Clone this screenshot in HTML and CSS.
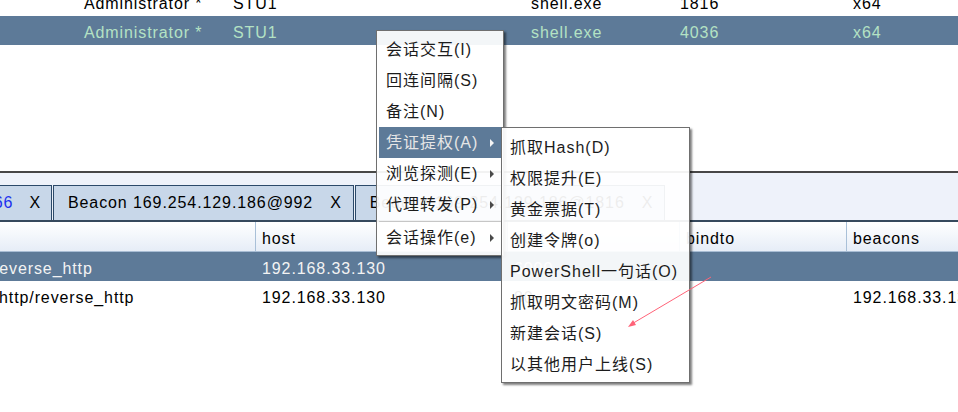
FILE: index.html
```html
<!DOCTYPE html>
<html>
<head>
<meta charset="utf-8">
<link rel="stylesheet" href="styles.css">
</head>
<body>
<div class="top-pane">
  <div class="top-grid">
    <div class="trow"><span></span><span>Administrator *</span><span>STU1</span><span>shell.exe</span><span>1816</span><span>x64</span></div>
    <div class="trow sel"><span></span><span>Administrator *</span><span>STU1</span><span>shell.exe</span><span>4036</span><span>x64</span></div>
  </div>
</div>
<div class="splitter"></div>
<div class="tabstrip">
  <div class="tabs">
    <div class="tab first"><span class="tab-label blue">Beacon 169.254.129.186@1866</span><span class="tab-x">X</span></div>
    <div class="tab"><span class="tab-label">Beacon 169.254.129.186@992</span><span class="tab-x">X</span></div>
    <div class="tab"><span class="tab-label">Beacon 169.254.129.186@1816</span><span class="tab-x">X</span></div>
  </div>
</div>
<div class="btable">
  <div class="bhead"><span></span><span>host</span><span>port</span><span>bindto</span><span>beacons</span></div>
  <div class="brow sel"><span class="c1 cut-a">reverse_http</span><span>192.168.33.130</span><span>6000</span><span></span><span></span></div>
  <div class="brow"><span class="c1 cut-b">http/reverse_http</span><span>192.168.33.130</span><span>80</span><span></span><span>192.168.33.130</span></div>
</div>

<div class="menu main">
  <div class="item">会话交互(I)</div>
  <div class="item">回连间隔(S)</div>
  <div class="item">备注(N)</div>
  <div class="item sel has-sub">凭证提权(A)</div>
  <div class="item has-sub">浏览探测(E)</div>
  <div class="item has-sub">代理转发(P)</div>
  <div class="sep"></div>
  <div class="item has-sub">会话操作(e)</div>
</div>
<div class="menu sub">
  <div class="item">抓取Hash(D)</div>
  <div class="item">权限提升(E)</div>
  <div class="item">黄金票据(T)</div>
  <div class="item">创建令牌(o)</div>
  <div class="item">PowerShell一句话(O)</div>
  <div class="item">抓取明文密码(M)</div>
  <div class="item">新建会话(S)</div>
  <div class="item">以其他用户上线(S)</div>
</div>

<svg class="mark" width="958" height="412" viewBox="0 0 958 412">
  <line x1="711" y1="277" x2="630" y2="325" stroke="#ff6378" stroke-width="1"/>
  <polygon points="628,327 636,325 633,320" fill="#ff6378"/>
</svg>
</body>
</html>
```
FILE: styles.css
```css
html, body {
  margin: 0;
  padding: 0;
}
body {
  width: 958px;
  height: 412px;
  overflow: hidden;
  position: relative;
  background: #ffffff;
  font-family: "Liberation Sans", "Noto Sans CJK SC", sans-serif;
  font-size: 16px;
  letter-spacing: 0.9px;
  color: #000000;
}

.top-pane {
  height: 171px;
  overflow: hidden;
}
.top-grid {
  margin-top: -13px;
}
.trow {
  display: grid;
  grid-template-columns: 77px 149px 298px 149px 173px 1fr;
  height: 29px;
}
.trow > span {
  padding: 4px 0 0 7px;
  line-height: 25px;
  white-space: nowrap;
  overflow: hidden;
}
.trow.sel {
  background: #5d7a98;
  color: #b4e2c4;
}

.splitter {
  height: 2px;
  background: #474747;
}
.tabstrip {
  background: #eef2fa;
  padding-top: 12px;
  border-bottom: 2px solid #36495d;
}
.tabs {
  display: flex;
  gap: 1px;
  height: 35px;
}
.tab {
  box-sizing: border-box;
  height: 35px;
  display: flex;
  align-items: center;
  flex: none;
  background: #c8d7e9;
  border: 1px solid #2c4a6a;
  border-bottom: none;
  padding: 0 11px 0 14px;
  white-space: nowrap;
}
.tab-label,
.tab-x {
  line-height: 20px;
}
.tab-x {
  margin-left: 17px;
}
.tab.first {
  width: 52px;
  justify-content: flex-end;
  overflow: hidden;
  border-left: none;
  padding-left: 0;
  padding-right: 10px;
}
.tab.first .tab-x {
  margin-left: 16px;
}
.tab-label.blue {
  color: #2030ee;
}

.bhead,
.brow {
  display: grid;
  grid-template-columns: 255px 252px 172px 167px 1fr;
}
.bhead {
  height: 29px;
  background: linear-gradient(#ffffff, #e6edf7);
  border-bottom: 1px solid #a8bdd4;
}
.bhead > span {
  border-left: 1px solid #a9c0d8;
  padding: 4px 0 0 6px;
  line-height: 25px;
  white-space: nowrap;
}
.bhead > span:first-child {
  border-left: none;
}
.brow {
  height: 29px;
}
.brow > span {
  padding: 4px 0 0 7px;
  line-height: 25px;
  white-space: nowrap;
  overflow: hidden;
}
.brow > span.c1 {
  padding-left: 0;
}
.cut-a {
  text-indent: -7px;
}
.cut-b {
  text-indent: -1px;
}
.brow.sel {
  background: #5d7a98;
  color: #f3f3f3;
}

.menu {
  position: absolute;
  box-sizing: border-box;
  background: rgba(255, 255, 255, 0.93);
  border: 1px solid #6f6f6f;
  box-shadow: 2px 2px 2px rgba(0, 0, 0, 0.5);
  padding: 3px 2px 2px;
  letter-spacing: 1px;
  color: #1c1c1c;
}
.menu.main {
  left: 376px;
  top: 30px;
  width: 128px;
}
.menu.sub {
  left: 501px;
  top: 127px;
  width: 189px;
  padding-top: 4px;
}
.item {
  position: relative;
  height: 31px;
  line-height: 31px;
  padding-left: 7px;
  white-space: nowrap;
}
.menu.sub .item {
  padding-left: 6px;
}
.item.sel {
  background: #5d7a98;
  color: #e6e6e6;
}
.item.has-sub::after {
  content: "";
  position: absolute;
  right: 7px;
  top: 12px;
  border-left: 4px solid #4a4a4a;
  border-top: 4px solid transparent;
  border-bottom: 4px solid transparent;
}
.item.sel.has-sub::after {
  border-left-color: #f4f4f4;
}
.sep {
  height: 1px;
  margin-top: 1px;
  background: #c6c6c6;
}

.mark {
  position: absolute;
  left: 0;
  top: 0;
  pointer-events: none;
}
```
